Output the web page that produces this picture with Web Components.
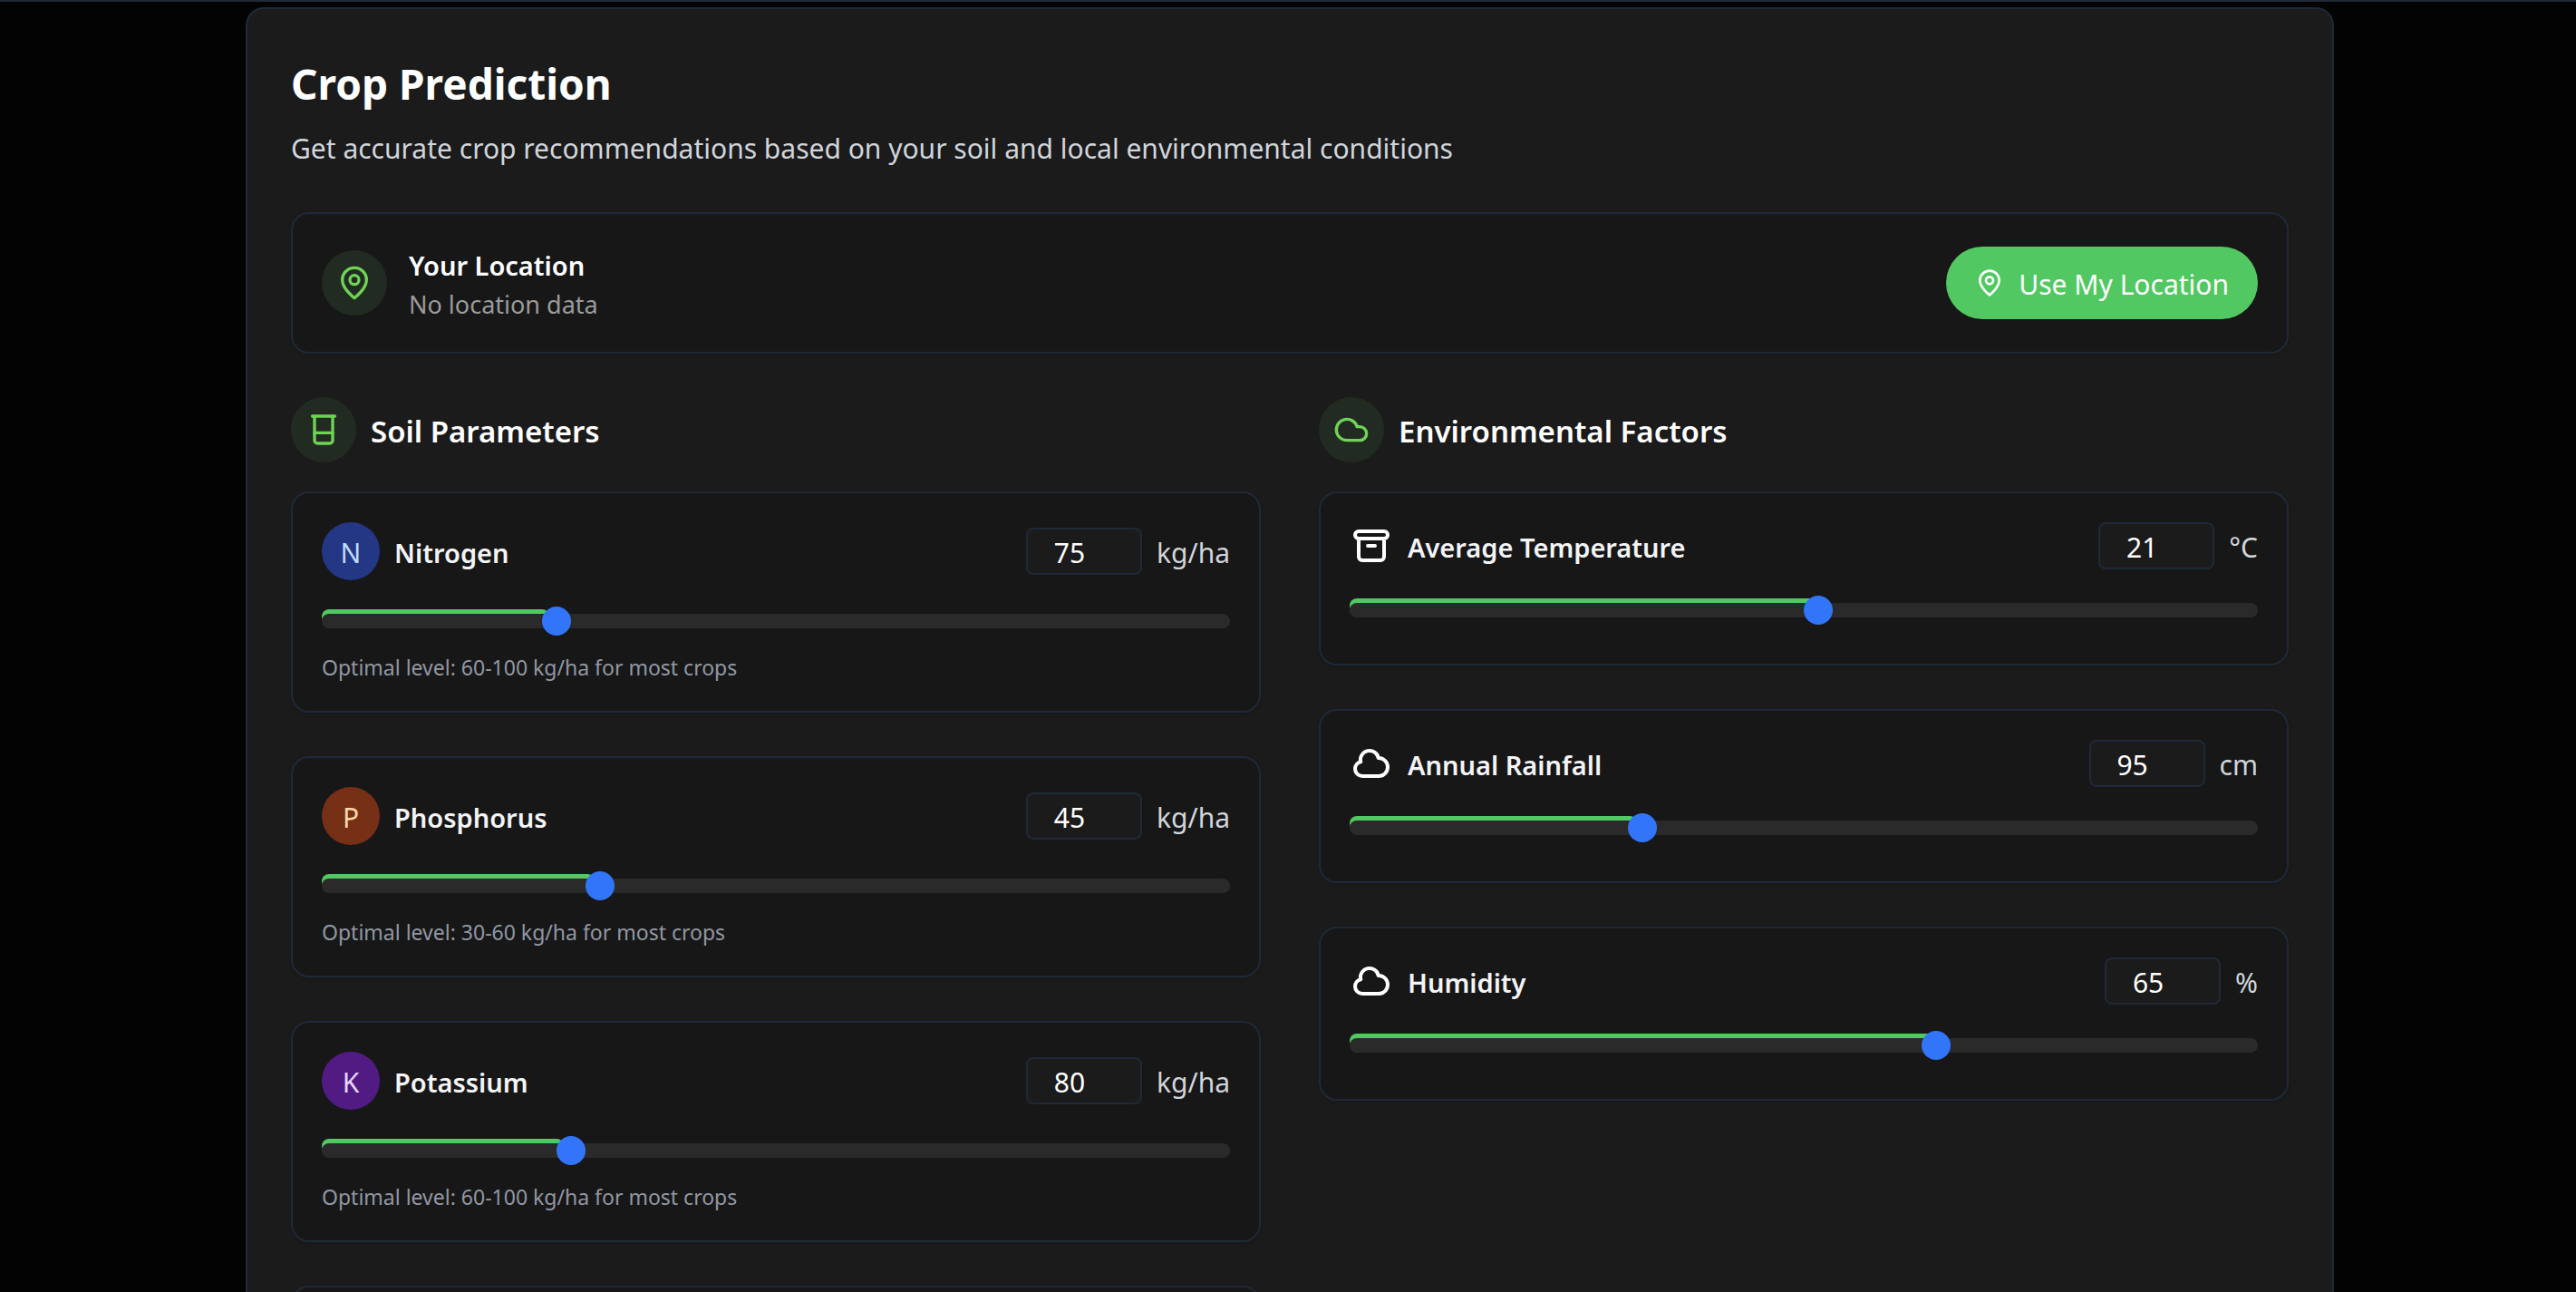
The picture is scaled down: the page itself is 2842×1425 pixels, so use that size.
<!DOCTYPE html>
<html lang="en">
<head>
<meta charset="utf-8">
<title>Crop Prediction</title>
<style>
  html, body { margin: 0; height: 100%; background: #030303; }
  body {
    font-family: "Noto Sans", "Open Sans", sans-serif;
    font-size: 30px;
    line-height: 48px;
    color: #fff;
    --line: #1f2937;
    --panel: #1b1b1b;
    --card: #171717;
    --green: #51c861;
    --leaf: #6fd456;
    --muted: #d1d5db;
  }
</style>
</head>
<body>
<crop-page></crop-page>

<script>
const ICONS = {
  pin: '<path d="M20 10c0 6-8 12-8 12s-8-6-8-12a8 8 0 0 1 16 0Z"/><circle cx="12" cy="10" r="3"/>',
  beaker: '<path d="M4.500 3h15"/><path d="M6 3v16a2 2 0 0 0 2 2h8a2 2 0 0 0 2-2V3"/><path d="M6 14h12"/>',
  cloud: '<path d="M17.500 19H9a7 7 0 1 1 6.710-9h1.790a4.500 4.500 0 1 1 0 9Z"/>',
  archive: '<path d="M5 8h14M5 8a2 2 0 1 1 0-4h14a2 2 0 1 1 0 4M5 8v10a2 2 0 0 0 2 2h10a2 2 0 0 0 2-2V8m-9 4h4"/>',
  sky: '<path d="M3 15a4 4 0 0 0 4 4h9a5 5 0 1 0-.1-9.999 5.002 5.002 0 1 0-9.780 2.096A4.001 4.001 0 0 0 3 15z"/>'
};

class UiIcon extends HTMLElement {
  connectedCallback() {
    this.attachShadow({ mode: 'open' }).innerHTML = `
      <style>
        :host { display: block; flex: none; width: var(--icon, 40px); height: var(--icon, 40px); }
        svg { display: block; width: 100%; height: 100%; }
      </style>
      <svg viewBox="0 0 24 24" fill="none" stroke="currentColor" stroke-width="2"
        stroke-linecap="round" stroke-linejoin="round" aria-hidden="true">${ICONS[this.getAttribute('name')]}</svg>`;
  }
}
customElements.define('ui-icon', UiIcon);

class IconDisc extends HTMLElement {
  connectedCallback() {
    this.attachShadow({ mode: 'open' }).innerHTML = `
      <style>
        :host { display: flex; flex: none; padding: 16px; border-radius: 50%; background: #222b22; color: var(--leaf); }
      </style>
      <ui-icon name="${this.getAttribute('name')}"></ui-icon>`;
  }
}
customElements.define('icon-disc', IconDisc);

class UiCard extends HTMLElement {
  connectedCallback() {
    this.attachShadow({ mode: 'open' }).innerHTML = `
      <style>
        :host { display: block; padding: 32px; border: 2px solid var(--line); border-radius: 20px;
          background: var(--card); box-shadow: 0 2px 4px rgba(0, 0, 0, .12); }
      </style>
      <slot></slot>`;
  }
}
customElements.define('ui-card', UiCard);

class LocationBar extends HTMLElement {
  connectedCallback() {
    this.attachShadow({ mode: 'open' }).innerHTML = `
      <style>
        :host { display: block; }
        .row, .place { display: flex; align-items: center; }
        .row { justify-content: space-between; min-height: 88px; }
        .place { gap: 24px; }
        h2, p { margin: 0; }
        h2 { font-size: 29px; line-height: 46px; font-weight: 600; padding-top: 2px; }
        p { font-size: 27px; line-height: 40px; color: #9b9b9b; }
        button { display: flex; align-items: center; gap: 16px; padding: 16px 32px; border: 0;
          border-radius: 40px; background: var(--green); color: #fff; font: inherit; --icon: 32px; }
        button span { line-height: 44px; padding-top: 4px; }
      </style>
      <ui-card>
        <div class="row">
          <div class="place">
            <icon-disc name="pin"></icon-disc>
            <div><h2>Your Location</h2><p>No location data</p></div>
          </div>
          <button type="button"><ui-icon name="pin"></ui-icon><span>Use My Location</span></button>
        </div>
      </ui-card>`;
  }
}
customElements.define('location-bar', LocationBar);

class FactorGroup extends HTMLElement {
  connectedCallback() {
    this.attachShadow({ mode: 'open' }).innerHTML = `
      <style>
        :host { display: flex; flex-direction: column; gap: 32px; min-width: 0; }
        header { display: flex; align-items: center; gap: 16px; }
        h2 { margin: 0; padding-top: 4px; font-size: 33px; line-height: 56px; font-weight: 600; }
        .list { display: flex; flex-direction: column; gap: 48px; }
      </style>
      <header><icon-disc name="${this.getAttribute('icon')}"></icon-disc><h2>${this.getAttribute('heading')}</h2></header>
      <div class="list"><slot></slot></div>`;
  }
}
customElements.define('factor-group', FactorGroup);

class FactorCard extends HTMLElement {
  connectedCallback() {
    const a = n => this.getAttribute(n);
    const min = +a('min'), max = +a('max'), value = +a('value');
    const mark = a('symbol')
      ? `<span class="badge ${a('symbol')}">${a('symbol')}</span>`
      : `<ui-icon name="${a('icon')}"></ui-icon>`;
    this.attachShadow({ mode: 'open' }).innerHTML = `
      <style>
        :host { display: block; --icon: 48px; }
        .row, .name, .entry { display: flex; align-items: center; gap: 16px; }
        .row { justify-content: space-between; }
        label, .unit { padding-top: 4px; }
        label { color: #f3f4f6; font-size: 29px; font-weight: 600; }
        .badge { display: grid; place-items: center; box-sizing: border-box; width: 64px; height: 64px;
          padding-top: 4px; border-radius: 50%; }
        .N { background: #233785; color: #bfdbfe; }
        .P { background: #763016; color: #fed7aa; }
        .K { background: #521b83; color: #e9d5ff; }
        .unit { color: var(--muted); }
        input { margin: 0; box-sizing: border-box; appearance: none; -webkit-appearance: none; }
        input[type=number] { width: 128px; height: 52px; padding: 2px 48px 0 16px; border: 2px solid var(--line);
          border-radius: 8px; background: var(--panel); color: #fff; font: inherit; text-align: center;
          appearance: textfield; -moz-appearance: textfield; }
        input::-webkit-inner-spin-button, input::-webkit-outer-spin-button { -webkit-appearance: none; margin: 0; }
        .slider { position: relative; box-sizing: border-box; height: 40px; margin-top: 32px; padding-top: 5px; }
        .fill { position: absolute; top: 0; left: 0; height: 16px; border-radius: 8px; background: var(--green); }
        input[type=range] { position: relative; display: block; width: 100%; height: 16px;
          border-radius: 8px; background: #2a2a2a; }
        input::-webkit-slider-runnable-track { height: 16px; }
        input::-webkit-slider-thumb { -webkit-appearance: none; width: 32px; height: 32px; margin-top: -8px;
          border-radius: 50%; background: #3275f8; }
        .hint { margin: 8px 0 0; font-size: 23px; line-height: 32px; color: #9297a3; }
      </style>
      <ui-card>
        <div class="row">
          <div class="name">${mark}<label for="amount">${a('label')}</label></div>
          <div class="entry">
            <input id="amount" type="number" min="${min}" max="${max}" value="${value}">
            <span class="unit">${a('unit')}</span>
          </div>
        </div>
        <div class="slider">
          <div class="fill"></div>
          <input type="range" aria-label="${a('label')}" min="${min}" max="${max}" value="${value}">
        </div>
        ${a('hint') ? `<p class="hint">${a('hint')}</p>` : ''}
      </ui-card>`;
    const root = this.shadowRoot;
    const number = root.querySelector('[type=number]');
    const range = root.querySelector('[type=range]');
    const fill = root.querySelector('.fill');
    const paint = () => { fill.style.width = (range.value - min) / (max - min) * 100 + '%'; };
    range.addEventListener('input', () => { number.value = range.value; paint(); });
    number.addEventListener('input', () => { range.value = number.value; paint(); });
    paint();
  }
}
customElements.define('factor-card', FactorCard);

class CropPage extends HTMLElement {
  connectedCallback() {
    this.attachShadow({ mode: 'open' }).innerHTML = `
      <style>
        :host { display: block; box-sizing: border-box; height: 100vh; overflow-y: auto; scrollbar-width: none;
          border-top: 2px solid var(--line); padding: 6px 0 48px 4px; }
        main { box-sizing: border-box; max-width: 2304px; margin: 0 auto; padding: 50px 48px 48px;
          border: 2px solid var(--line); border-radius: 20px; background: var(--panel); }
        h1, p { margin: 0; }
        h1 { font-size: 46px; line-height: 64px; font-weight: 700; }
        p { margin: 16px 0 46px; color: var(--muted); }
        .columns { display: grid; grid-template-columns: 1fr 1fr; gap: 64px; margin-top: 48px; }
      </style>
      <main>
        <h1>Crop Prediction</h1>
        <p>Get accurate crop recommendations based on your soil and local environmental conditions</p>
        <location-bar></location-bar>
        <div class="columns">
          <factor-group icon="beaker" heading="Soil Parameters">
            <factor-card symbol="N" label="Nitrogen" min="0" max="300" value="75" unit="kg/ha"
              hint="Optimal level: 60-100 kg/ha for most crops"></factor-card>
            <factor-card symbol="P" label="Phosphorus" min="0" max="150" value="45" unit="kg/ha"
              hint="Optimal level: 30-60 kg/ha for most crops"></factor-card>
            <factor-card symbol="K" label="Potassium" min="0" max="300" value="80" unit="kg/ha"
              hint="Optimal level: 60-100 kg/ha for most crops"></factor-card>
            <ui-card></ui-card>
          </factor-group>
          <factor-group icon="cloud" heading="Environmental Factors">
            <factor-card icon="archive" label="Average Temperature" min="-10" max="50" value="21" unit="°C"></factor-card>
            <factor-card icon="sky" label="Annual Rainfall" min="0" max="300" value="95" unit="cm"></factor-card>
            <factor-card icon="sky" label="Humidity" min="0" max="100" value="65" unit="%"></factor-card>
          </factor-group>
        </div>
      </main>`;
  }
}
customElements.define('crop-page', CropPage);
</script>
</body>
</html>
